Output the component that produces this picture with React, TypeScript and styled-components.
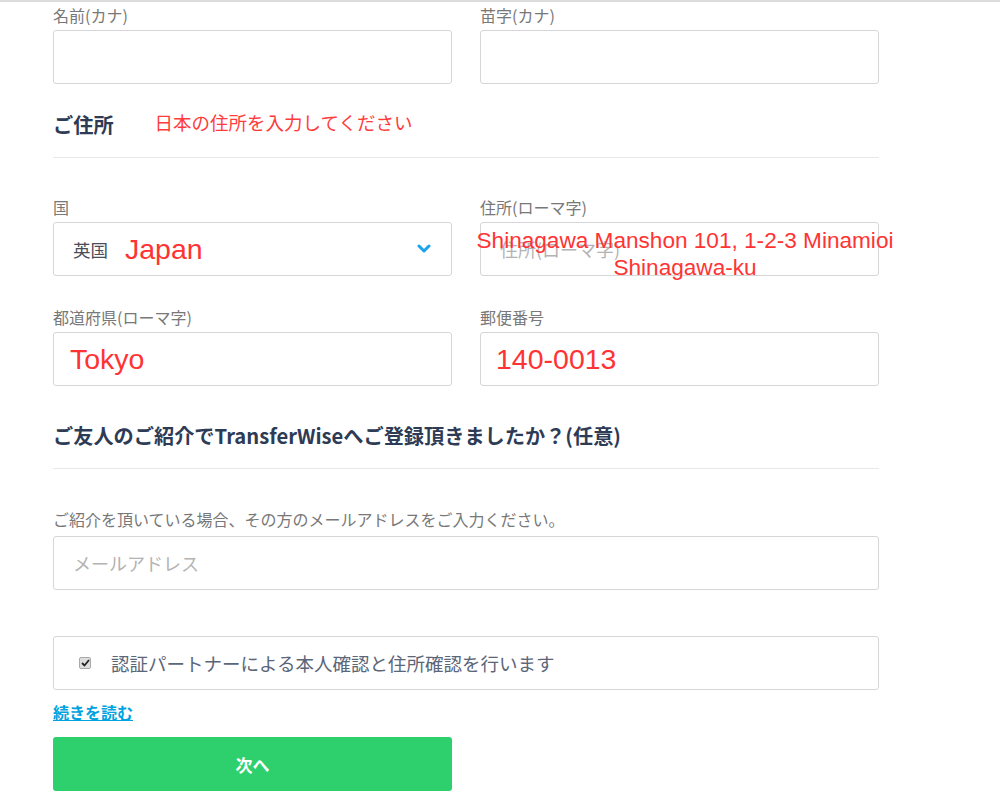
import React from "react";
import styled, { createGlobalStyle } from "styled-components";

const GlobalStyle = createGlobalStyle`
  html, body {
    margin: 0;
    padding: 0;
    background: #fff;
  }
  body {
    font-family: "Noto Sans CJK JP", "Noto Sans", sans-serif;
  }
`;

const Page = styled.div`
  border-top: 2px solid #dcdcdc;
  min-height: 799px;
`;

const Form = styled.div`
  width: 826px;
  margin-left: 53px;
  padding-top: 4px;
`;

const Grid = styled.div<{ $top?: number }>`
  display: grid;
  grid-template-columns: 399px 399px;
  column-gap: 28px;
  row-gap: 32px;
  margin-top: ${(p) => p.$top ?? 0}px;
`;

const Field = styled.div<{ $top?: number }>`
  position: relative;
  display: flex;
  flex-direction: column;
  margin-top: ${(p) => p.$top ?? 0}px;
`;

const Label = styled.label<{ $gap?: number }>`
  display: block;
  font-size: 16px;
  line-height: 18px;
  color: #787878;
  margin-bottom: ${(p) => p.$gap ?? 6}px;
`;

const Box = styled.div`
  box-sizing: border-box;
  height: 54px;
  border: 1px solid #d6d6d8;
  border-radius: 3px;
  background: #fff;
  display: flex;
  align-items: center;
  padding: 0 19px;
`;

const Placeholder = styled.span`
  font-size: 18px;
  color: #b3b3b3;
`;

const RedValue = styled.span`
  font-family: "Liberation Sans", Arial, sans-serif;
  font-size: 28.5px;
  color: #ff3333;
  line-height: 1;
`;

const SelectBox = styled(Box)`
  justify-content: space-between;
  padding-right: 20px;
`;

const SelectValue = styled.div`
  display: flex;
  align-items: center;
  gap: 17px;
`;

const CountryText = styled.span`
  font-size: 17.5px;
  color: #4a4d5a;
`;

const Chevron = styled.svg`
  width: 14px;
  height: 10px;
`;

const Overlay = styled.div`
  position: absolute;
  left: -20px;
  top: 29px;
  width: 450px;
  text-align: center;
  font-family: "Liberation Sans", Arial, sans-serif;
  font-size: 22.6px;
  line-height: 27px;
  color: #ff3333;
  pointer-events: none;
`;

const SectionHead = styled.div<{ $top: number }>`
  display: flex;
  align-items: center;
  margin-top: ${(p) => p.$top}px;
  height: 24px;
  padding-bottom: 20px;
  border-bottom: 1px solid #e6e9ea;
`;

const HeadTitle = styled.h3`
  margin: 0;
  font-size: 20.2px;
  font-weight: 700;
  color: #2e3b55;
  line-height: 24px;
`;

const Note = styled.span`
  margin-left: 41px;
  font-size: 18.5px;
  color: #ff3b3b;
  position: relative;
  top: -3px;
`;

const CheckRow = styled(Box)`
  margin-top: 46px;
  padding-left: 25px;
  gap: 20px;
`;

const FakeCheck = styled.span`
  box-sizing: border-box;
  width: 12px;
  height: 12px;
  border: 1px solid #a9a9a9;
  border-radius: 2px;
  background: #dedede;
  display: flex;
  align-items: center;
  justify-content: center;
`;

const CheckText = styled.span`
  font-size: 18.5px;
  color: #5b6679;
`;

const ReadMore = styled.a`
  display: inline-block;
  margin-top: 12px;
  font-size: 16px;
  line-height: 20px;
  font-weight: 700;
  color: #00a2e0;
  text-decoration: underline;
`;

const Button = styled.button`
  display: block;
  margin-top: 13px;
  width: 399px;
  height: 54px;
  border: none;
  border-radius: 3px;
  background: #2ed06e;
  color: #fff;
  font-family: "Noto Sans CJK JP", sans-serif;
  font-size: 17px;
  font-weight: 700;
`;

export default function App() {
  return (
    <Page>
      <GlobalStyle />
      <Form>
        <Grid>
          <Field>
            <Label>名前(カナ)</Label>
            <Box />
          </Field>
          <Field>
            <Label>苗字(カナ)</Label>
            <Box />
          </Field>
        </Grid>

        <SectionHead $top={29}>
          <HeadTitle>ご住所</HeadTitle>
          <Note>日本の住所を入力してください</Note>
        </SectionHead>

        <Grid $top={40}>
          <Field>
            <Label>国</Label>
            <SelectBox>
              <SelectValue>
                <CountryText>英国</CountryText>
                <RedValue>Japan</RedValue>
              </SelectValue>
              <Chevron viewBox="0 0 14 10">
                <polyline
                  points="2,2 7,7 12,2"
                  fill="none"
                  stroke="#1aa3ec"
                  strokeWidth="3"
                  strokeLinecap="round"
                  strokeLinejoin="round"
                />
              </Chevron>
            </SelectBox>
          </Field>
          <Field>
            <Label>住所(ローマ字)</Label>
            <Box>
              <Placeholder>住所(ローマ字)</Placeholder>
            </Box>
            <Overlay>
              Shinagawa Manshon 101, 1-2-3 Minamioi
              <br />
              Shinagawa-ku
            </Overlay>
          </Field>
          <Field>
            <Label>都道府県(ローマ字)</Label>
            <Box style={{ paddingLeft: 16 }}>
              <RedValue>Tokyo</RedValue>
            </Box>
          </Field>
          <Field>
            <Label>郵便番号</Label>
            <Box style={{ paddingLeft: 15 }}>
              <RedValue>140-0013</RedValue>
            </Box>
          </Field>
        </Grid>

        <SectionHead $top={38}>
          <HeadTitle>ご友人のご紹介でTransferWiseへご登録頂きましたか？(任意)</HeadTitle>
        </SectionHead>

        <Field $top={41}>
          <Label $gap={8}>ご紹介を頂いている場合、その方のメールアドレスをご入力ください。</Label>
          <Box>
            <Placeholder>メールアドレス</Placeholder>
          </Box>
        </Field>

        <CheckRow>
          <FakeCheck>
            <svg width="9" height="8" viewBox="0 0 9 8">
              <polyline
                points="1,4 3.5,6.5 8,1"
                fill="none"
                stroke="#222"
                strokeWidth="1.8"
              />
            </svg>
          </FakeCheck>
          <CheckText>認証パートナーによる本人確認と住所確認を行います</CheckText>
        </CheckRow>

        <ReadMore href="#">続きを読む</ReadMore>
        <Button>次へ</Button>
      </Form>
    </Page>
  );
}
